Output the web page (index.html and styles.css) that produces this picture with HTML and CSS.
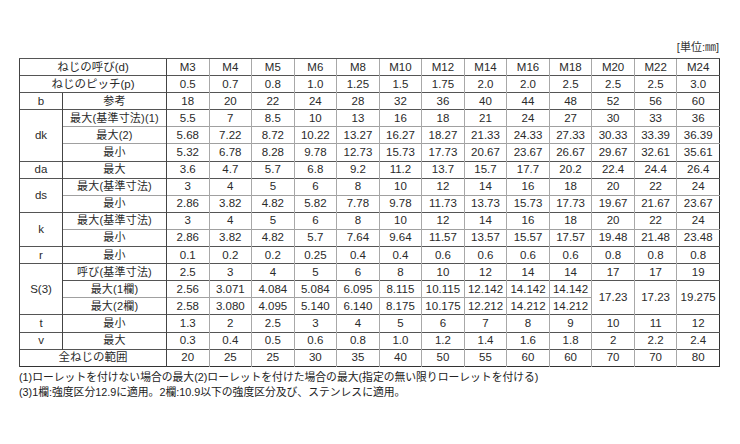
FILE: index.html
```html
<!DOCTYPE html>
<html lang="ja">
<head>
<meta charset="utf-8">
<link rel="stylesheet" href="styles.css">
</head>
<body>
<div class="page">
  <div class="unit">[単位:㎜]</div>
  <table class="spec">
    <colgroup>
      <col class="c1"><col class="c2">
      <col class="n"><col class="n"><col class="n"><col class="n"><col class="n"><col class="n"><col class="n"><col class="n"><col class="n"><col class="n"><col class="n"><col class="n"><col class="n">
    </colgroup>
    <tbody>
      <tr class="g"><td colspan="2" class="lab">ねじの呼び(d)</td><td class="s">M3</td><td>M4</td><td>M5</td><td>M6</td><td>M8</td><td>M10</td><td>M12</td><td>M14</td><td>M16</td><td>M18</td><td>M20</td><td>M22</td><td>M24</td></tr>
      <tr class="g"><td colspan="2" class="lab">ねじのピッチ(p)</td><td class="s">0.5</td><td>0.7</td><td>0.8</td><td>1.0</td><td>1.25</td><td>1.5</td><td>1.75</td><td>2.0</td><td>2.0</td><td>2.5</td><td>2.5</td><td>2.5</td><td>3.0</td></tr>
      <tr class="g"><td class="lab">b</td><td class="lab sub">参考</td><td class="s">18</td><td>20</td><td>22</td><td>24</td><td>28</td><td>32</td><td>36</td><td>40</td><td>44</td><td>48</td><td>52</td><td>56</td><td>60</td></tr>
      <tr class="g"><td rowspan="3" class="lab">dk</td><td class="lab sub">最大(基準寸法)(1)</td><td class="s">5.5</td><td>7</td><td>8.5</td><td>10</td><td>13</td><td>16</td><td>18</td><td>21</td><td>24</td><td>27</td><td>30</td><td>33</td><td>36</td></tr>
      <tr><td class="lab sub">最大(2)</td><td class="s">5.68</td><td>7.22</td><td>8.72</td><td>10.22</td><td>13.27</td><td>16.27</td><td>18.27</td><td>21.33</td><td>24.33</td><td>27.33</td><td>30.33</td><td>33.39</td><td>36.39</td></tr>
      <tr><td class="lab sub">最小</td><td class="s">5.32</td><td>6.78</td><td>8.28</td><td>9.78</td><td>12.73</td><td>15.73</td><td>17.73</td><td>20.67</td><td>23.67</td><td>26.67</td><td>29.67</td><td>32.61</td><td>35.61</td></tr>
      <tr class="g"><td class="lab">da</td><td class="lab sub">最大</td><td class="s">3.6</td><td>4.7</td><td>5.7</td><td>6.8</td><td>9.2</td><td>11.2</td><td>13.7</td><td>15.7</td><td>17.7</td><td>20.2</td><td>22.4</td><td>24.4</td><td>26.4</td></tr>
      <tr class="g"><td rowspan="2" class="lab">ds</td><td class="lab sub">最大(基準寸法)</td><td class="s">3</td><td>4</td><td>5</td><td>6</td><td>8</td><td>10</td><td>12</td><td>14</td><td>16</td><td>18</td><td>20</td><td>22</td><td>24</td></tr>
      <tr><td class="lab sub">最小</td><td class="s">2.86</td><td>3.82</td><td>4.82</td><td>5.82</td><td>7.78</td><td>9.78</td><td>11.73</td><td>13.73</td><td>15.73</td><td>17.73</td><td>19.67</td><td>21.67</td><td>23.67</td></tr>
      <tr class="g"><td rowspan="2" class="lab">k</td><td class="lab sub">最大(基準寸法)</td><td class="s">3</td><td>4</td><td>5</td><td>6</td><td>8</td><td>10</td><td>12</td><td>14</td><td>16</td><td>18</td><td>20</td><td>22</td><td>24</td></tr>
      <tr><td class="lab sub">最小</td><td class="s">2.86</td><td>3.82</td><td>4.82</td><td>5.7</td><td>7.64</td><td>9.64</td><td>11.57</td><td>13.57</td><td>15.57</td><td>17.57</td><td>19.48</td><td>21.48</td><td>23.48</td></tr>
      <tr class="g"><td class="lab">r</td><td class="lab sub">最小</td><td class="s">0.1</td><td>0.2</td><td>0.2</td><td>0.25</td><td>0.4</td><td>0.4</td><td>0.6</td><td>0.6</td><td>0.6</td><td>0.6</td><td>0.8</td><td>0.8</td><td>0.8</td></tr>
      <tr class="g"><td rowspan="3" class="lab">S(3)</td><td class="lab sub">呼び(基準寸法)</td><td class="s">2.5</td><td>3</td><td>4</td><td>5</td><td>6</td><td>8</td><td>10</td><td>12</td><td>14</td><td>14</td><td>17</td><td>17</td><td>19</td></tr>
      <tr class="g"><td class="lab sub">最大(1欄)</td><td class="s">2.56</td><td>3.071</td><td>4.084</td><td>5.084</td><td>6.095</td><td>8.115</td><td>10.115</td><td>12.142</td><td>14.142</td><td>14.142</td><td rowspan="2">17.23</td><td rowspan="2">17.23</td><td rowspan="2">19.275</td></tr>
      <tr><td class="lab sub">最大(2欄)</td><td class="s">2.58</td><td>3.080</td><td>4.095</td><td>5.140</td><td>6.140</td><td>8.175</td><td>10.175</td><td>12.212</td><td>14.212</td><td>14.212</td></tr>
      <tr class="g"><td class="lab">t</td><td class="lab sub">最小</td><td class="s">1.3</td><td>2</td><td>2.5</td><td>3</td><td>4</td><td>5</td><td>6</td><td>7</td><td>8</td><td>9</td><td>10</td><td>11</td><td>12</td></tr>
      <tr class="g"><td class="lab">v</td><td class="lab sub">最大</td><td class="s">0.3</td><td>0.4</td><td>0.5</td><td>0.6</td><td>0.8</td><td>1.0</td><td>1.2</td><td>1.4</td><td>1.6</td><td>1.8</td><td>2</td><td>2.2</td><td>2.4</td></tr>
      <tr class="g"><td colspan="2" class="lab">全ねじの範囲</td><td class="s">20</td><td>25</td><td>25</td><td>30</td><td>35</td><td>40</td><td>50</td><td>55</td><td>60</td><td>60</td><td>70</td><td>70</td><td>80</td></tr>
    </tbody>
  </table>
  <div class="notes">
    <p>(1)ローレットを付けない場合の最大(2)ローレットを付けた場合の最大(指定の無い限りローレットを付ける)</p>
    <p>(3)1欄:強度区分12.9に適用。2欄:10.9以下の強度区分及び、ステンレスに適用。</p>
  </div>
</div>
</body>
</html>
```

FILE: styles.css
```css
html, body {
  margin: 0;
  padding: 0;
  background: #ffffff;
}
.page {
  padding: 40px 20px 0 19px;
  font-family: "Liberation Sans", "Noto Sans CJK JP", sans-serif;
  color: #2a2a2a;
}
.unit {
  text-align: right;
  font-size: 11px;
  line-height: 14px;
  height: 18px;
  padding-right: 1px;
  color: #333;
}
.spec {
  width: 701px;
  table-layout: fixed;
  border-collapse: collapse;
  border: 1.5px solid #333;
  font-size: 11.5px;
}
.spec col.c1 { width: 43px; }
.spec col.c2 { width: 104px; }
.spec td {
  height: 16.1px;
  padding: 0;
  text-align: center;
  vertical-align: middle;
  line-height: 13px;
  border-left: 1px solid #a8a8a8;
  border-top: 1px solid #a0a0a0;
  white-space: nowrap;
  overflow: hidden;
}
.spec tr.g td {
  border-top-color: #555;
}
.spec td.lab {
  border-left-color: #444;
}
.spec td.sub {
  font-size: 11px;
  letter-spacing: 0.2px;
}
.spec td.s {
  border-left-color: #444;
}
.notes {
  margin-top: 3px;
  font-size: 10.8px;
  color: #222;
}
.notes p {
  margin: 0;
  line-height: 15px;
}
```
